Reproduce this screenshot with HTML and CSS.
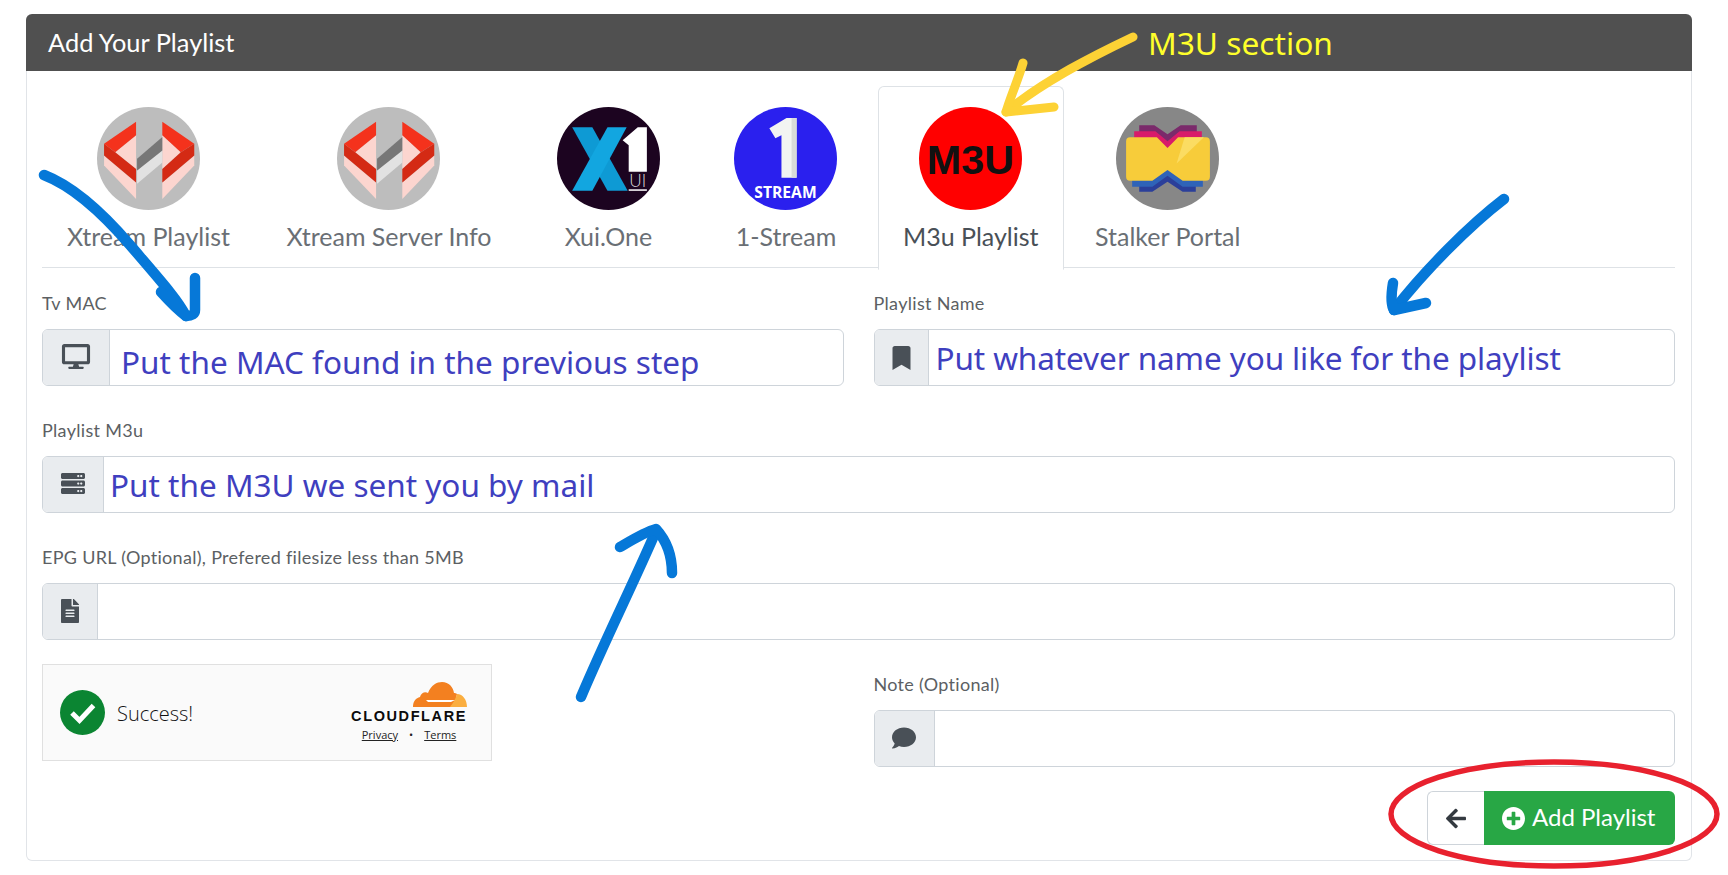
FILE: index.html
```html
<!DOCTYPE html>
<html lang="en">
<head>
    <meta charset="UTF-8">
    <meta name="viewport" content="width=device-width, initial-scale=1.0">
    <title>Add Your Playlist</title>
    <link rel="stylesheet" href="styles.css">
</head>
<body>

    <div class="card">
        <div class="card-header">Add Your Playlist</div>

        <div class="card-body">

            <!-- Playlist type tabs -->
            <div class="tabs">
                <div class="tab">
                    <svg class="tab-icon" viewBox="0 0 102 102">
                        <circle cx="51" cy="51" r="51" fill="#bdbdbd"/>
                        <polygon points="7,48 7,58 38.7,91 38.7,74.7" fill="#fcd5cf"/>
                        <polygon points="18,44.7 38.7,28 38.7,61.3" fill="#fcd5cf"/>
                        <polygon points="38.7,14.7 7,36.3 18,44.7 38.7,28" fill="#f4321c"/>
                        <polygon points="7,36.3 7,48 38.7,74.7 38.7,61.3 18,44.7" fill="#d42a14"/>
                        <polygon points="96.3,48 96.3,58 64.7,91 64.7,74.7" fill="#fcd5cf"/>
                        <polygon points="83,44.7 64.7,28 64.7,61.3" fill="#fcd5cf"/>
                        <polygon points="64.7,14.7 96.3,36.3 83,44.7 64.7,28" fill="#f4321c"/>
                        <polygon points="96.3,36.3 96.3,48 64.7,74.7 64.7,61.3 83,44.7" fill="#d42a14"/>
                        <polygon points="39.7,63 64.7,43 64.7,55 39.7,76" fill="#e2e2e2"/>
                        <polygon points="39.7,51.3 64.7,29.7 64.7,43 39.7,63" fill="#777"/>
                    </svg>
                    <div class="tab-label">Xtream Playlist</div>
                </div>
                <div class="tab">
                    <svg class="tab-icon" viewBox="0 0 102 102">
                        <circle cx="51" cy="51" r="51" fill="#bdbdbd"/>
                        <polygon points="7,48 7,58 38.7,91 38.7,74.7" fill="#fcd5cf"/>
                        <polygon points="18,44.7 38.7,28 38.7,61.3" fill="#fcd5cf"/>
                        <polygon points="38.7,14.7 7,36.3 18,44.7 38.7,28" fill="#f4321c"/>
                        <polygon points="7,36.3 7,48 38.7,74.7 38.7,61.3 18,44.7" fill="#d42a14"/>
                        <polygon points="96.3,48 96.3,58 64.7,91 64.7,74.7" fill="#fcd5cf"/>
                        <polygon points="83,44.7 64.7,28 64.7,61.3" fill="#fcd5cf"/>
                        <polygon points="64.7,14.7 96.3,36.3 83,44.7 64.7,28" fill="#f4321c"/>
                        <polygon points="96.3,36.3 96.3,48 64.7,74.7 64.7,61.3 83,44.7" fill="#d42a14"/>
                        <polygon points="39.7,63 64.7,43 64.7,55 39.7,76" fill="#e2e2e2"/>
                        <polygon points="39.7,51.3 64.7,29.7 64.7,43 39.7,63" fill="#777"/>
                    </svg>
                    <div class="tab-label">Xtream Server Info</div>
                </div>
                <div class="tab">
                    <svg class="tab-icon" viewBox="0 0 102 102">
                        <circle cx="51" cy="51" r="51" fill="#1c0420"/>
                        <polygon points="15,20 35,20 70,83 50,83" fill="#0e9ad4"/>
                        <polygon points="50,20 69,20 35,83 15,83" fill="#12a6e0"/>
                        <polygon points="65,33 80,20 89,20 89,64 71,64 71,38" fill="#fff"/>
                        <text class="xui-text" x="80" y="79" text-anchor="middle">UI</text>
                        <rect x="71" y="81.5" width="18" height="1.5" fill="#fff"/>
                    </svg>
                    <div class="tab-label">Xui.One</div>
                </div>
                <div class="tab">
                    <svg class="tab-icon" viewBox="0 0 102 102">
                        <circle cx="51" cy="51" r="51" fill="#2a20ee"/>
                        <polygon points="35,21 52,11 62,11 62,70 47,70 47,28 41,31" fill="#f2f4f2"/>
                        <rect x="57" y="11" width="5" height="59" fill="#d8dbd8"/>
                        <text class="stream-text" x="51" y="90" text-anchor="middle">STREAM</text>
                    </svg>
                    <div class="tab-label">1-Stream</div>
                </div>
                <div class="tab active">
                    <svg class="tab-icon" viewBox="0 0 102 102">
                        <circle cx="51" cy="51" r="51" fill="#ff0000"/>
                        <text class="m3u-text" x="51" y="66" text-anchor="middle">M3U</text>
                    </svg>
                    <div class="tab-label">M3u Playlist</div>
                </div>
                <div class="tab">
                    <svg class="tab-icon" viewBox="0 0 102 102">
                        <circle cx="51" cy="51" r="51" fill="#878787"/>
                        <path d="M23 18H38L51 27L64 18H80V40H23Z" fill="#7b2a6b"/>
                        <path d="M18 24H39L51 34L63 24H85V45H18Z" fill="#d81b6a"/>
                        <path d="M23 60H79V84H66L51 74L36 84H23Z" fill="#2b3f9a"/>
                        <path d="M16 60H86V79H66L51 68L36 79H16Z" fill="#2f63b8"/>
                        <path d="M14 30H40.500L51 40.500L61.500 30H89Q93 30 93 34V69Q93 73 89 73H66L51 62.500L36 73H14Q10 73 10 69V34Q10 30 14 30Z" fill="#f7cc3a"/>
                        <path d="M68 30H87L60 56Z" fill="#fbdc62"/>
                    </svg>
                    <div class="tab-label">Stalker Portal</div>
                </div>
            </div>

            <!-- Form -->
            <div class="form-grid">
                <div class="field">
                    <div class="field-label">Tv MAC</div>
                    <div class="input-group">
                        <div class="addon">
                            <svg class="icon-desktop" viewBox="0 0 576 512"><path d="M528 0H48C21.5 0 0 21.5 0 48v320c0 26.5 21.5 48 48 48h192l-16 48h-72c-13.3 0-24 10.7-24 24s10.7 24 24 24h272c13.3 0 24-10.7 24-24s-10.7-24-24-24h-72l-16-48h192c26.5 0 48-21.5 48-48V48c0-26.5-21.5-48-48-48zm-16 352H64V64h448v288z"/></svg>
                        </div>
                        <div class="input-text text-mac">Put the MAC found in the previous step</div>
                    </div>
                </div>

                <div class="field">
                    <div class="field-label">Playlist Name</div>
                    <div class="input-group">
                        <div class="addon">
                            <svg class="icon-bookmark" viewBox="0 0 384 512"><path d="M0 512V48C0 21.49 21.49 0 48 0h288c26.51 0 48 21.49 48 48v464L192 400 0 512z"/></svg>
                        </div>
                        <div class="input-text text-name">Put whatever name you like for the playlist</div>
                    </div>
                </div>

                <div class="field full">
                    <div class="field-label">Playlist M3u</div>
                    <div class="input-group">
                        <div class="addon">
                            <svg class="icon-server" viewBox="0 0 512 512"><path d="M480 160H32c-17.673 0-32-14.327-32-32V64c0-17.673 14.327-32 32-32h448c17.673 0 32 14.327 32 32v64c0 17.673-14.327 32-32 32zm-48-88c-13.255 0-24 10.745-24 24s10.745 24 24 24 24-10.745 24-24-10.745-24-24-24zm-64 0c-13.255 0-24 10.745-24 24s10.745 24 24 24 24-10.745 24-24-10.745-24-24-24zm112 248H32c-17.673 0-32-14.327-32-32v-64c0-17.673 14.327-32 32-32h448c17.673 0 32 14.327 32 32v64c0 17.673-14.327 32-32 32zm-48-88c-13.255 0-24 10.745-24 24s10.745 24 24 24 24-10.745 24-24-10.745-24-24-24zm-64 0c-13.255 0-24 10.745-24 24s10.745 24 24 24 24-10.745 24-24-10.745-24-24-24zm112 248H32c-17.673 0-32-14.327-32-32v-64c0-17.673 14.327-32 32-32h448c17.673 0 32 14.327 32 32v64c0 17.673-14.327 32-32 32zm-48-88c-13.255 0-24 10.745-24 24s10.745 24 24 24 24-10.745 24-24-10.745-24-24-24zm-64 0c-13.255 0-24 10.745-24 24s10.745 24 24 24 24-10.745 24-24-10.745-24-24-24z"/></svg>
                        </div>
                        <div class="input-text text-m3u">Put the M3U we sent you by mail</div>
                    </div>
                </div>

                <div class="field full">
                    <div class="field-label">EPG URL (Optional), Prefered filesize less than 5MB</div>
                    <div class="input-group">
                        <div class="addon">
                            <svg class="icon-file" viewBox="0 0 384 512"><path d="M224 136V0H24C10.7 0 0 10.7 0 24v464c0 13.3 10.7 24 24 24h336c13.3 0 24-10.7 24-24V160H248c-13.2 0-24-10.8-24-24zm64 236c0 6.6-5.4 12-12 12H108c-6.6 0-12-5.4-12-12v-8c0-6.6 5.4-12 12-12h168c6.6 0 12 5.4 12 12v8zm0-64c0 6.6-5.4 12-12 12H108c-6.6 0-12-5.4-12-12v-8c0-6.6 5.4-12 12-12h168c6.6 0 12 5.4 12 12v8zm0-72v8c0 6.6-5.4 12-12 12H108c-6.6 0-12-5.4-12-12v-8c0-6.6 5.4-12 12-12h168c6.6 0 12 5.4 12 12zm96-114.1v6.1H256V0h6.1c6.4 0 12.5 2.5 17 7l97.9 98c4.5 4.5 7 10.6 7 16.9z"/></svg>
                        </div>
                        <div class="input-text"></div>
                    </div>
                </div>

                <!-- Captcha box -->
                <div class="captcha">
                    <svg class="captcha-check" viewBox="0 0 45 45">
                        <circle cx="22.5" cy="22.5" r="22.5" fill="#0b8532"/>
                        <path d="M12 23L19.5 30.5L33.5 15.5" fill="none" stroke="#fff" stroke-width="5"/>
                    </svg>
                    <div class="captcha-text">Success!</div>
                    <div class="captcha-brand">
                        <svg class="captcha-cloud" viewBox="0 0 54 25">
                            <path d="M0 25C0 19 3 16 7 15C8 11 12 9 15 11C18 3 24 0 29 0C36 0 40 5 41 11C42 11 43 11 44 12L41 25Z" fill="#f38020"/>
                            <path d="M44 12C50 12 54 18 54 25H37C39 22 42 19 44 12Z" fill="#faae40"/>
                            <path d="M13 18H42L38 20H15Z" fill="#fff"/>
                        </svg>
                        <div class="captcha-word">CLOUDFLARE</div>
                        <div class="captcha-links">
                            <span class="captcha-link">Privacy</span>
                            <span>•</span>
                            <span class="captcha-link">Terms</span>
                        </div>
                    </div>
                </div>

                <div class="field">
                    <div class="field-label">Note (Optional)</div>
                    <div class="input-group">
                        <div class="addon">
                            <svg class="icon-comment" viewBox="0 0 512 512"><path d="M256 32C114.6 32 0 125.1 0 240c0 49.6 21.4 95 57 130.7C44.5 421.1 2.7 466 2.2 466.5c-2.2 2.3-2.8 5.7-1.5 8.7S4.8 480 8 480c66.3 0 116-31.8 140.6-51.4 32.7 12.3 69 19.4 107.4 19.4 141.4 0 256-93.1 256-208S397.4 32 256 32z"/></svg>
                        </div>
                        <div class="input-text"></div>
                    </div>
                </div>

                <div class="actions full">
                    <div class="btn btn-back">
                        <svg class="icon-arrow" viewBox="0 0 448 512"><path d="M257.5 445.1l-22.2 22.2c-9.4 9.4-24.6 9.4-33.9 0L7 273c-9.4-9.4-9.4-24.6 0-33.9L201.4 44.7c9.4-9.4 24.6-9.4 33.9 0l22.2 22.2c9.5 9.5 9.3 25-.4 34.3L136.6 216H424c13.3 0 24 10.7 24 24v32c0 13.3-10.7 24-24 24H136.6l120.5 114.8c9.8 9.3 10 24.8.4 34.3z"/></svg>
                    </div>
                    <div class="btn btn-add">
                        <svg class="icon-plus" viewBox="8 8 496 496"><path d="M256 8C119 8 8 119 8 256s111 248 248 248 248-111 248-248S393 8 256 8zm144 276c0 6.6-5.4 12-12 12h-92v92c0 6.6-5.4 12-12 12h-56c-6.6 0-12-5.4-12-12v-92h-92c-6.6 0-12-5.4-12-12v-56c0-6.6 5.4-12 12-12h92v-92c0-6.6 5.4-12 12-12h56c6.6 0 12 5.4 12 12v92h92c6.6 0 12 5.4 12 12v56z"/></svg>
                        <span class="btn-text">Add Playlist</span>
                    </div>
                </div>
            </div>
        </div>
    </div>

    <!-- Hand drawn notes on top of the page -->
    <div class="note-title">M3U section</div>
    <svg class="notes" viewBox="0 0 1728 875">
        <g class="note-blue">
            <path d="M44 175C70 185 100 210 130 245C160 280 178 300 186 316"/>
            <path d="M161 292C170 302 178 310 186 316C192 316 195 314 195 310V278"/>
            <path d="M1504 199C1470 225 1425 270 1394 310"/>
            <path d="M1393 283C1391 295 1391 305 1394 310L1426 303"/>
            <path d="M581 697C605 640 635 580 656 531"/>
            <path d="M620 547C632 540 645 532 656 529C666 540 672 555 672 573"/>
        </g>
        <g class="note-yellow">
            <path d="M1133 37C1095 55 1045 80 1006 112"/>
            <path d="M1023 63C1018 80 1010 98 1006 112L1054 107"/>
        </g>
        <ellipse class="note-red" cx="1554" cy="814" rx="163" ry="52"/>
    </svg>

</body>
</html>
```

FILE: styles.css
```css
/* Base */
html, body {
    height: 875px;
    overflow: hidden;
}

body {
    margin: 0;
    padding: 14px 36px 0 26px;
    background: #fff;
    font-family: "Lato", sans-serif;
    color: #555;
}

/* Card */
.card {
    border: 1px solid #e1e4e8;
    border-top: none;
    border-radius: 6px;
    height: 847px;
    box-sizing: border-box;
}

.card-header {
    height: 57px;
    margin: 0 -1px;
    padding-left: 22px;
    background: #505050;
    border-radius: 6px 6px 0 0;
    color: #fff;
    font-size: 25.4px;
    line-height: 57px;
}

.card-body {
    padding: 15px 16px 0 15px;
}

/* Tabs */
.tabs {
    display: flex;
    gap: 6.5px;
    height: 182px;
    box-sizing: border-box;
    border-bottom: 1px solid #dee2e6;
}

.tab {
    display: flex;
    flex-direction: column;
    align-items: center;
    min-width: 121px;
    height: 160px;
    padding: 21px 25px 0;
    color: #6a6f75;
}

.tab.active {
    height: 162px;
    padding: 20px 24px 0;
    background: #fff;
    border: 1px solid #dee2e6;
    border-bottom-color: #fff;
    border-radius: 6px 6px 0 0;
    color: #495057;
}

.tab-icon {
    display: block;
    width: 103px;
    height: 103px;
    flex-shrink: 0;
}

.tab-label {
    margin-top: 11px;
    font-size: 25px;
    line-height: 30px;
    white-space: nowrap;
}

.xui-text {
    font-family: "Lato", sans-serif;
    font-size: 17px;
    font-weight: 300;
    fill: #ddd;
}

.stream-text {
    font-family: "Open Sans", sans-serif;
    font-size: 15.5px;
    font-weight: 700;
    fill: #fff;
}

.m3u-text {
    font-family: "Liberation Sans", sans-serif;
    font-size: 41px;
    font-weight: 700;
    fill: #111;
}

/* Form */
.form-grid {
    display: grid;
    grid-template-columns: 1fr 1fr;
    column-gap: 30px;
    row-gap: 24px;
    margin-top: 15px;
}

.full {
    grid-column: 1 / 3;
}

.field {
    padding-top: 8px;
}

.field-label {
    height: 24px;
    margin-bottom: 14px;
    font-size: 18px;
    line-height: 24px;
    letter-spacing: 0.3px;
    color: #5c5f63;
}

.input-group {
    display: flex;
    height: 57px;
    box-sizing: border-box;
    border: 1px solid #ced4da;
    border-radius: 6px;
    overflow: hidden;
}

.addon {
    display: flex;
    align-items: center;
    justify-content: center;
    padding: 0 18px;
    background: #e9ecef;
    border-right: 1px solid #ced4da;
}

.addon svg {
    display: block;
    fill: #495057;
}

.icon-desktop { width: 30px; height: 25px; margin-top: -2px; }
.icon-bookmark { width: 19px; height: 24px; margin: 0 -1px; }
.icon-server { width: 24px; height: 27px; margin-top: -2px; }
.icon-file { width: 18px; height: 24px; margin-top: -2px; }
.icon-comment { width: 24px; height: 24px; margin: -2px -0.5px 0; }

/* Text typed over the inputs */
.input-text {
    flex: 1;
    font-family: "Noto Sans", sans-serif;
    font-size: 31.5px;
    color: #3f3fbf;
    white-space: nowrap;
}

.text-mac {
    padding: 7px 0 0 11px;
    line-height: 50px;
}

.text-name {
    padding: 3px 0 0 7px;
    line-height: 50px;
    letter-spacing: -0.1px;
}

.text-m3u {
    padding: 3px 0 0 6px;
    line-height: 50px;
}

/* Captcha */
.captcha {
    display: flex;
    align-items: center;
    width: 450px;
    height: 97px;
    box-sizing: border-box;
    padding: 0 24px 0 17px;
    background: #fafafa;
    border: 1px solid #e0e0e0;
}

.captcha-check {
    width: 45px;
    height: 45px;
    flex-shrink: 0;
}

.captcha-text {
    flex: 1;
    margin: 2px 0 0 12px;
    font-family: "Open Sans", sans-serif;
    font-size: 20px;
    font-weight: 300;
    color: #111;
}

.captcha-brand {
    display: flex;
    flex-direction: column;
    align-items: flex-end;
    padding-bottom: 2px;
}

.captcha-cloud {
    display: block;
    width: 54px;
    height: 25px;
}

.captcha-word {
    margin-top: 3px;
    font-family: "Liberation Sans", sans-serif;
    font-size: 14.5px;
    font-weight: 700;
    line-height: 13px;
    letter-spacing: 1.6px;
    color: #0b0b0b;
}

.captcha-links {
    display: flex;
    gap: 11px;
    align-self: center;
    margin-top: 4px;
    font-family: "Open Sans", sans-serif;
    font-size: 11px;
    color: #232323;
}

.captcha-link {
    text-decoration: underline;
}

/* Buttons */
.actions {
    display: flex;
    justify-content: flex-end;
}

.btn {
    display: flex;
    align-items: center;
    height: 54px;
    box-sizing: border-box;
    font-size: 24px;
}

.btn-back {
    width: 57px;
    justify-content: center;
    border: 1px solid #ced4da;
    border-right: none;
    border-radius: 6px 0 0 6px;
}

.btn-add {
    gap: 7px;
    width: 191px;
    padding-left: 18px;
    background: #28a745;
    border-radius: 0 6px 6px 0;
    color: #fff;
}

.btn-text {
    margin-bottom: 3px;
}

.icon-arrow {
    width: 20px;
    height: 23px;
    fill: #343a40;
}

.icon-plus {
    width: 23px;
    height: 23px;
    fill: #fff;
}

/* Notes drawn over the screenshot */
.notes {
    position: absolute;
    top: 0;
    left: 0;
    width: 1728px;
    height: 875px;
    pointer-events: none;
}

.note-blue path {
    fill: none;
    stroke: #0678d8;
    stroke-width: 10.5;
    stroke-linecap: round;
    stroke-linejoin: round;
}

.note-yellow path {
    fill: none;
    stroke: #fdd235;
    stroke-width: 9;
    stroke-linecap: round;
    stroke-linejoin: round;
}

.note-red {
    fill: none;
    stroke: #e8212e;
    stroke-width: 5.5;
}

.note-title {
    position: absolute;
    top: 22px;
    left: 1148px;
    font-family: "Noto Sans", sans-serif;
    font-size: 31.7px;
    line-height: 42px;
    color: #ffff2b;
}
```
